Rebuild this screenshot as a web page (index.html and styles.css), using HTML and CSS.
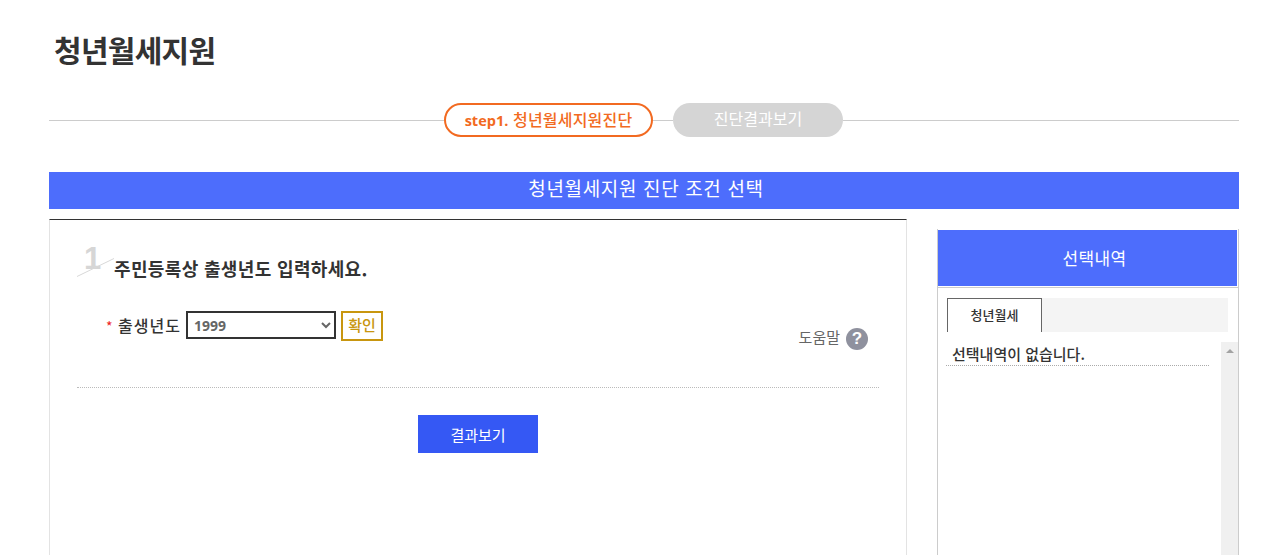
FILE: index.html

```html
<!DOCTYPE html>
<html lang="ko">
<head>
  <meta charset="UTF-8" />
  <meta name="viewport" content="width=device-width, initial-scale=1.0"/>
  <title>청년월세지원</title>
  <link rel="stylesheet" href="styles.css">
</head>
<body>
  <div class="wrap">
    <h1>청년월세지원</h1>

    <div class="steps">
      <span class="step-line grow"></span>
      <span class="step on"><b>step1.</b> 청년월세지원진단</span>
      <span class="step-line gap"></span>
      <span class="step">진단결과보기</span>
      <span class="step-line grow"></span>
    </div>

    <h2 class="banner">청년월세지원 진단 조건 선택</h2>

    <div class="content">
      <div class="main">
        <div class="question">
          <span class="num">1</span>
          <svg class="num-line" width="38" height="20" viewBox="0 0 38 20"><path d="M0 19.5 37 1.5" stroke="#d8d8d8" fill="none"/></svg>
          <h3>주민등록상 출생년도 입력하세요.</h3>
        </div>

        <div class="field-row">
          <div class="field">
            <span class="req">*</span>
            <label for="birthYear">출생년도</label>
            <select id="birthYear">
              <option>1999</option>
            </select>
            <button class="confirm" type="button">확인</button>
          </div>
          <a class="help">도움말
            <span class="help-icon">?</span>
          </a>
        </div>

        <div class="actions">
          <button class="result" type="button">결과보기</button>
        </div>
      </div>

      <div class="side">
        <div class="side-top">
          <div class="side-head">선택내역</div>
        </div>
        <div class="tabs">
          <span class="tab">청년월세</span>
        </div>
        <div class="side-body">
          <div class="list">
            <p class="empty">선택내역이 없습니다.</p>
          </div>
          <div class="scroll"><span class="arrow"></span></div>
        </div>
      </div>
    </div>
  </div>
</body>
</html>
```

FILE: styles.css

```css
html, body {
  margin: 0;
  padding: 0;
  background: #fff;
}
body {
  font-family: "Noto Sans CJK KR", "Noto Sans", sans-serif;
  color: #333;
}
.wrap {
  height: 555px;
  overflow: hidden;
  padding: 0 47px 0 49px;
}
h1 {
  margin: 0;
  padding: 27px 0 0 5px;
  height: 103px;
  box-sizing: border-box;
  font-size: 30px;
  line-height: 44px;
  font-weight: 700;
  letter-spacing: -0.7px;
}
.steps {
  display: flex;
  align-items: center;
  height: 34px;
}
.step-line {
  height: 1px;
  background: #ccc;
}
.step-line.grow {
  flex: 1;
}
.step-line.grow:first-child {
  flex: 0 0 395px;
}
.step-line.gap {
  width: 20px;
}
.step {
  width: 170px;
  height: 34px;
  box-sizing: border-box;
  border-radius: 17px;
  background: #d5d5d5;
  color: #fff;
  font-size: 16px;
  line-height: 30px;
  text-align: center;
}
.step.on {
  width: 209px;
  background: #fff;
  border: 2px solid #f26a21;
  color: #f26a21;
  line-height: 28px;
  font-weight: 500;
  letter-spacing: 0.2px;
}
.step b {
  font-family: "Open Sans", sans-serif;
  font-size: 14.5px;
  font-weight: 700;
  letter-spacing: 0;
}
.banner {
  margin: 35px 0 0;
  padding-left: 4px;
  height: 37px;
  background: #4d6dfc;
  color: #fff;
  font-size: 19px;
  font-weight: 400;
  line-height: 32px;
  text-align: center;
  letter-spacing: 0.65px;
}
.content {
  display: flex;
  gap: 30px;
  margin-top: 10px;
}
.main {
  width: 858px;
  height: 400px;
  box-sizing: border-box;
  border-top: 1px solid #333;
  border-left: 1px solid #e3e3e3;
  border-right: 1px solid #e3e3e3;
  padding: 0 27px;
}
.question {
  position: relative;
  height: 91px;
  padding: 34px 0 0 37px;
  box-sizing: border-box;
}
.question h3 {
  margin: 0;
  font-size: 18px;
  line-height: 28px;
  font-weight: 700;
  color: #333;
  letter-spacing: 0.35px;
}
.num {
  position: absolute;
  left: 7px;
  top: 21px;
  font-family: "Liberation Sans", sans-serif;
  font-size: 31px;
  line-height: 36px;
  font-weight: 700;
  color: #d6d6d6;
}
.num-line {
  position: absolute;
  left: 0;
  top: 37px;
}
.field-row {
  display: flex;
  justify-content: space-between;
  height: 76px;
  border-bottom: 1px dotted #bbb;
  padding: 0 11px 0 29px;
}
.field {
  display: flex;
  align-items: flex-start;
}
.req {
  color: #e22;
  width: 12px;
  font-size: 14px;
  line-height: 30px;
}
.field label {
  width: 68px;
  font-size: 16px;
  line-height: 28px;
  letter-spacing: 1px;
  font-weight: 500;
}
.field select {
  width: 150px;
  height: 28px;
  box-sizing: border-box;
  border: 2px solid #333;
  border-radius: 0;
  background: #fff;
  color: #666;
  font-family: "Noto Sans", sans-serif;
  font-size: 14px;
  font-weight: 700;
  padding: 0 2px;
}
.confirm {
  margin-left: 5px;
  width: 42px;
  height: 30px;
  box-sizing: border-box;
  padding: 0 0 2px;
  border: 2px solid #c8960f;
  background: #fff;
  color: #c8960f;
  font-family: inherit;
  font-size: 15px;
  font-weight: 500;
  line-height: 22px;
}
.help {
  display: flex;
  align-items: flex-start;
  gap: 6px;
  height: 22px;
  margin-top: 17px;
  font-size: 15px;
  line-height: 18px;
  color: #666;
}
.help-icon {
  width: 22px;
  height: 22px;
  border-radius: 50%;
  background: #8f919e;
  color: #fff;
  font-family: "Liberation Sans", sans-serif;
  font-size: 17px;
  font-weight: 700;
  line-height: 22px;
  text-align: center;
}
.actions {
  margin-top: 27px;
  text-align: center;
}
.result {
  width: 120px;
  height: 38px;
  border: none;
  background: #3558f4;
  color: #fff;
  font-family: inherit;
  font-size: 15px;
}
.side {
  width: 302px;
  height: 400px;
  box-sizing: border-box;
  margin-top: 10px;
  border-left: 1px solid #ccc;
  border-right: 1px solid #ccc;
}
.side-top {
  padding: 1px 1px 1px 0;
  border-bottom: 1px solid #ccc;
}
.side-head {
  height: 56px;
  padding-left: 14px;
  background: #4d6dfc;
  color: #fff;
  font-size: 17px;
  line-height: 56px;
  text-align: center;
  letter-spacing: 0.3px;
}
.tabs {
  display: flex;
  margin: 10px 10px 0 9px;
  height: 34px;
  background: #f4f4f4;
}
.tab {
  width: 95px;
  height: 34px;
  box-sizing: border-box;
  border: 1px solid #666;
  border-bottom: 0;
  background: #fff;
  font-size: 13px;
  font-weight: 500;
  line-height: 32px;
  text-align: center;
}
.side-body {
  display: flex;
  justify-content: space-between;
  margin-top: 10px;
  height: 300px;
}
.list {
  width: 263px;
  margin-left: 8px;
}
.empty {
  margin: 0;
  padding-left: 6px;
  height: 24px;
  box-sizing: border-box;
  border-bottom: 1px dotted #aaa;
  font-size: 15px;
  font-weight: 500;
  line-height: 23px;
}
.scroll {
  width: 17px;
  background: #f0f0f0;
  position: relative;
}
.arrow {
  position: absolute;
  left: 5px;
  top: 7px;
  border: 4px solid transparent;
  border-top: 0;
  border-bottom: 4px solid #a3a3a3;
}
```
